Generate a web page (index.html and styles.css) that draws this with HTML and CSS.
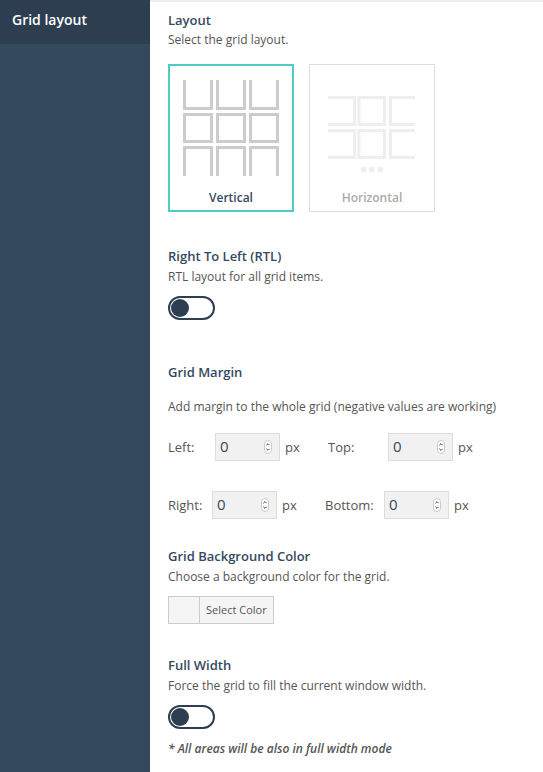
FILE: index.html
```html
<!DOCTYPE html>
<html>
  <head>
    <meta charset="utf-8">
    <title>Grid layout</title>
    <link rel="stylesheet" href="styles.css">
  </head>
  <body>
    <div class="sidebar">
      <div class="side-item">Grid layout</div>
    </div>
    <div class="main">
      <div class="setting setting-layout">
        <h4>Layout</h4>
        <p>Select the grid layout.</p>
        <div class="choices">
          <div class="choice active">
            <svg class="choice-icon" width="96" height="96" viewBox="0 0 96 96">
              <path class="ico" d="M1.5 0V28.5H28.5V0M34.5 0V28.5H61.5V0M67.5 0V28.5H94.5V0"/>
              <path class="ico" d="M1.5 34.5H28.5V61.5H1.5ZM34.5 34.5H61.5V61.5H34.5ZM67.5 34.5H94.5V61.5H67.5Z"/>
              <path class="ico" d="M1.5 96V67.5H28.5V96M34.5 96V67.5H61.5V96M67.5 96V67.5H94.5V96"/>
            </svg>
            <span>Vertical</span>
          </div>
          <div class="choice">
            <svg class="choice-icon" width="96" height="96" viewBox="0 0 96 96">
              <g transform="translate(4 16)">
                <path class="ico-light" d="M0 1.5H26.5V28.5H0M0 34.5H26.5V61.5H0"/>
                <path class="ico-light" d="M31 1.5H56.5V28.5H31ZM31 34.5H56.5V61.5H31Z"/>
                <path class="ico-light" d="M87 1.5H62.5V28.5H87M87 34.5H62.5V61.5H87"/>
                <rect class="dot" x="33" y="71" width="5" height="5"/>
                <rect class="dot" x="41" y="71" width="5" height="5"/>
                <rect class="dot" x="50" y="71" width="5" height="5"/>
              </g>
            </svg>
            <span>Horizontal</span>
          </div>
        </div>
      </div>

      <div class="setting setting-rtl">
        <h4>Right To Left (RTL)</h4>
        <p>RTL layout for all grid items.</p>
        <div class="toggle"><i></i></div>
      </div>

      <div class="setting setting-margin">
        <h4>Grid Margin</h4>
        <p class="margin-note">Add margin to the whole grid (negative values are working)</p>
        <div class="margin-row row-first">
          <label class="lbl-left">Left:</label>
          <div class="num"><b>0</b><svg width="8" height="14" viewBox="0 0 8 14"><rect x=".5" y=".5" width="7" height="13" rx="3.5"/><path d="M2.4 5.2L4 3.6L5.6 5.2M2.4 8.8L4 10.4L5.6 8.8"/></svg></div>
          <span class="unit">px</span>
          <label class="lbl-top">Top:</label>
          <div class="num"><b>0</b><svg width="8" height="14" viewBox="0 0 8 14"><rect x=".5" y=".5" width="7" height="13" rx="3.5"/><path d="M2.4 5.2L4 3.6L5.6 5.2M2.4 8.8L4 10.4L5.6 8.8"/></svg></div>
          <span class="unit">px</span>
        </div>
        <div class="margin-row row-second">
          <label class="lbl-right">Right:</label>
          <div class="num"><b>0</b><svg width="8" height="14" viewBox="0 0 8 14"><rect x=".5" y=".5" width="7" height="13" rx="3.5"/><path d="M2.4 5.2L4 3.6L5.6 5.2M2.4 8.8L4 10.4L5.6 8.8"/></svg></div>
          <span class="unit">px</span>
          <label class="lbl-bottom">Bottom:</label>
          <div class="num"><b>0</b><svg width="8" height="14" viewBox="0 0 8 14"><rect x=".5" y=".5" width="7" height="13" rx="3.5"/><path d="M2.4 5.2L4 3.6L5.6 5.2M2.4 8.8L4 10.4L5.6 8.8"/></svg></div>
          <span class="unit">px</span>
        </div>
      </div>

      <div class="setting setting-bg">
        <h4>Grid Background Color</h4>
        <p>Choose a background color for the grid.</p>
        <div class="color-btn"><i></i><span>Select Color</span></div>
      </div>

      <div class="setting setting-full">
        <h4>Full Width</h4>
        <p>Force the grid to fill the current window width.</p>
        <div class="toggle"><i></i></div>
        <em class="note">* All areas will be also in full width mode</em>
      </div>
    </div>
  </body>
</html>
```

FILE: styles.css
```css
html, body {
  height: 100%;
}
body {
  margin: 0;
  display: flex;
  overflow: hidden;
  font-family: "Open Sans", sans-serif;
  font-size: 12px;
  color: #555;
  background: #fff;
}
.sidebar {
  width: 150px;
  height: 772px;
  flex: none;
  background: #34495e;
}
.side-item {
  height: 44px;
  padding-left: 12px;
  line-height: 40px;
  font-size: 14px;
  font-weight: 600;
  color: #fff;
  background: #2c3e50;
}
.main {
  flex: 1;
  height: 770px;
  padding-left: 18px;
  border-top: 2px solid #eee;
}
h4 {
  margin: 0;
  font-size: 13px;
  line-height: 20px;
  font-weight: 600;
  color: #34495e;
}
p {
  margin: 1px 0 0;
  line-height: 20px;
}
.setting-layout {
  padding-top: 8px;
}
.setting-layout p {
  margin-top: 0;
}
.choices {
  display: flex;
  gap: 15px;
  margin-top: 14px;
}
.choice {
  box-sizing: border-box;
  width: 126px;
  height: 148px;
  padding-top: 15px;
  border: 1px solid #ddd;
  text-align: center;
  font-weight: 600;
  color: #aaa;
}
.choice span {
  display: block;
  margin-top: 12px;
  line-height: 20px;
}
.choice-icon {
  display: block;
  margin: 0 auto;
}
.choice.active {
  border: 2px solid #4ecdc4;
  padding-top: 14px;
  color: #34495e;
}
.ico, .ico-light {
  fill: none;
  stroke: #ccc;
  stroke-width: 3;
}
.ico-light {
  stroke: #eee;
}
.dot {
  fill: #eee;
}
.setting-rtl {
  margin-top: 34px;
}
.toggle {
  box-sizing: border-box;
  width: 47px;
  height: 24px;
  margin-top: 9px;
  padding: 1px;
  border: 2px solid #2c3e50;
  border-radius: 12px;
}
.toggle i {
  display: block;
  width: 18px;
  height: 18px;
  border-radius: 50%;
  background: #2c3e50;
}
.setting-margin {
  margin-top: 42px;
}
.margin-note {
  margin-top: 15px;
}
.margin-row {
  display: flex;
  align-items: center;
  height: 28px;
  font-size: 13px;
}
.row-first {
  margin-top: 16px;
}
.row-second {
  margin-top: 30px;
}
.lbl-left { width: 47px; }
.lbl-right { width: 44px; }
.lbl-top { width: 60px; margin-left: 27px; }
.lbl-bottom { width: 59px; margin-left: 27px; }
.num {
  box-sizing: border-box;
  display: flex;
  align-items: center;
  justify-content: space-between;
  width: 65px;
  height: 28px;
  padding: 0 7px 3px 4px;
  border: 1px solid #ddd;
  background: #f1f1f1;
}
.num b {
  font-weight: 400;
  font-size: 15px;
  color: #34495e;
}
.num svg {
  margin-top: 3px;
}
.num svg rect {
  fill: #fff;
  stroke: #ccc;
}
.num svg path {
  fill: none;
  stroke: #444;
  stroke-width: 1;
}
.unit {
  margin-left: 5px;
  width: 16px;
}
.setting-bg {
  margin-top: 27px;
}
.color-btn {
  box-sizing: border-box;
  display: flex;
  width: 106px;
  height: 28px;
  margin-top: 9px;
  border: 1px solid #ccc;
  font-size: 11px;
  line-height: 26px;
  background: #f5f5f5;
}
.color-btn i {
  width: 30px;
  border-right: 1px solid #ccc;
}
.color-btn span {
  padding-left: 6px;
}
.setting-full {
  margin-top: 31px;
}
.note {
  display: block;
  margin-top: 10px;
  font-size: 12px;
  font-weight: 600;
  line-height: 20px;
}
```
